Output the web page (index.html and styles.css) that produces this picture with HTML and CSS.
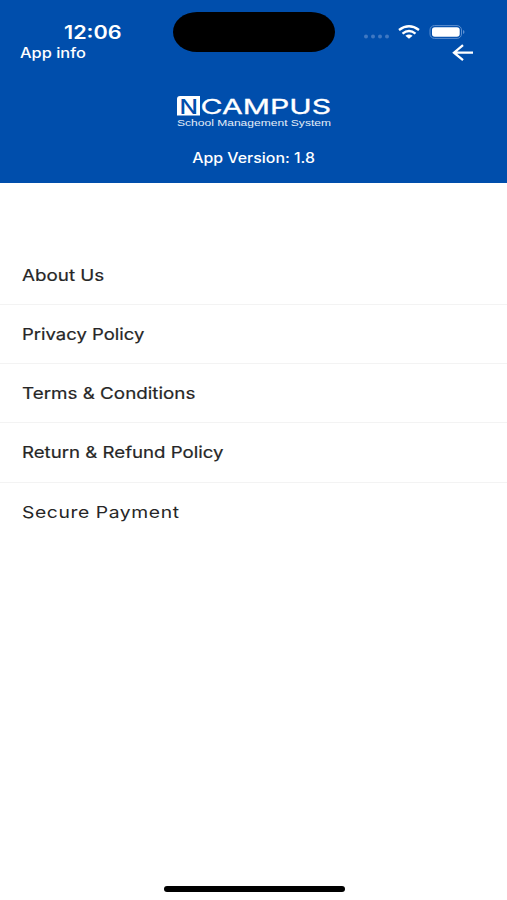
FILE: index.html
```html
<!DOCTYPE html>
<html lang="en">
<head>
<meta charset="utf-8">
<title>App info</title>
<link rel="stylesheet" href="styles.css">
</head>
<body>
<main class="screen">
  <header class="header">
    <div class="status">
      <time class="clock">12:06</time>
      <div class="island"></div>
      <div class="indicators">
        <svg class="signal" width="26" height="6" viewBox="0 0 26 6"><g fill="#3f78c2"><circle cx="3" cy="3.500" r="2"/><circle cx="10" cy="3.500" r="2"/><circle cx="17" cy="3.500" r="2"/><circle cx="24" cy="3.500" r="2"/></g></svg>
        <svg class="wifi" width="22" height="14" viewBox="0 0 22 14"><g fill="none" stroke="#fff" stroke-width="2.4"><path d="M1 5Q11-2.400 21 5"/><path d="M4.500 8.600Q11 3.600 17.500 8.600"/></g><path d="M7.400 10.700Q11 8.100 14.600 10.700L11 13.800Z" fill="#fff"/></svg>
        <svg class="battery" width="36" height="14" viewBox="0 0 36 14"><rect x="1" y=".6" width="31.500" height="12.800" rx="4.400" fill="none" stroke="#5c8fd0"/><rect x="3" y="2.200" width="27.700" height="9.600" rx="2.800" fill="#fff"/><path d="M34 5q1.500.5 1.500 2t-1.500 2z" fill="#5c8fd0"/></svg>
      </div>
    </div>
    <div class="bar">
      <h1 class="title"><span class="wide">App info</span></h1>
      <svg class="back" width="22" height="18" viewBox="0 0 22 18"><path d="M21 8.700H2M11 1.200L2 8.700L11 16.200" fill="none" stroke="#fff" stroke-width="2.300"/></svg>
    </div>
    <svg class="logo" width="156" height="34" viewBox="0 0 156 34">
      <path d="M4 1H24V20.500H1V4Q1 1 4 1Z" fill="#fff"/>
      <text class="logo-n" x="3.500" y="18.500" textLength="18.500" lengthAdjust="spacingAndGlyphs">N</text>
      <text class="logo-name" x="24.500" y="18.500" textLength="130.500" lengthAdjust="spacingAndGlyphs">CAMPUS</text>
      <text class="logo-tag" x="1" y="30.600" textLength="154" lengthAdjust="spacingAndGlyphs">School Management System</text>
    </svg>
    <p class="version"><span class="wide">App Version: 1.8</span></p>
  </header>
  <nav class="menu">
    <a class="row about"><span class="wide">About Us</span></a>
    <a class="row privacy"><span class="wide">Privacy Policy</span></a>
    <a class="row terms"><span class="wide">Terms &amp; Conditions</span></a>
    <a class="row refund"><span class="wide">Return &amp; Refund Policy</span></a>
    <a class="row secure"><span class="wide">Secure Payment</span></a>
  </nav>
  <div class="home"></div>
</main>
</body>
</html>
```
FILE: styles.css
```css
* { box-sizing: border-box; }
body { margin: 0; background: #fff; font-family: Inter, "Liberation Sans", sans-serif; color: #262626; }
.screen { width: 507px; height: 900px; display: flex; flex-direction: column; overflow: hidden; }
.header { height: 183px; background: #004eac; color: #fff; display: flex; flex-direction: column; align-items: center; }
.status { width: 100%; height: 42px; padding-top: 12px; display: grid; grid-template-columns: 173px 162px 1fr; }
.clock { font-size: 18px; font-weight: 600; line-height: 22px; padding: 10px 0 0 64px; transform-origin: 64px 0; transform: scaleX(1.2); }
.island { height: 40px; border-radius: 24px / 20px; background: #000; }
.indicators { display: flex; padding: 13px 0 0 28px; }
.signal { margin-top: 8px; }
.wifi { margin-left: 9px; }
.battery { margin-left: 9px; }
.bar { width: 100%; height: 22px; padding: 0 33px 0 20px; display: flex; align-items: center; justify-content: space-between; }
.title { margin: 0; font-size: 14px; line-height: 20px; font-weight: 500; }
.wide { display: inline-block; transform-origin: left; transform: scaleX(1.17); }
.logo { margin-top: 31px; flex: none; overflow: visible; }
.logo-n { font-family: Inter, sans-serif; font-size: 20.5px; font-weight: 500; fill: #004eac; }
.logo-name { font-family: Inter, sans-serif; font-size: 20px; font-weight: 400; fill: #fff; stroke: #fff; stroke-width: .3px; }
.logo-tag { font-family: "Liberation Sans", sans-serif; font-size: 9.5px; fill: #e4edf8; }
.version { margin: 19px 0 0; font-size: 14px; line-height: 20px; font-weight: 500; }
.version .wide { transform-origin: center; transform: translateX(.5px) scaleX(1.135); }
.menu { padding-top: 63px; display: flex; flex-direction: column; }
.row { height: 59.15px; padding-left: 21.5px; display: flex; align-items: center; font-size: 16.5px; font-weight: 400; -webkit-text-stroke: .2px #262626; border-bottom: 1px solid #f3f3f3; }
.row:last-child { border-bottom: 0; height: 58px; -webkit-text-stroke: 0; }
.about .wide { transform: scaleX(1.14); }
.privacy .wide { transform: scaleX(1.12); }
.terms .wide { transform: scaleX(1.14); }
.refund .wide { transform: scaleX(1.13); }
.secure .wide { letter-spacing: .5px; transform: scaleX(1.17); }
.home { width: 181px; height: 6px; margin: auto auto 8px 164px; border-radius: 3px; background: #000; }
```
